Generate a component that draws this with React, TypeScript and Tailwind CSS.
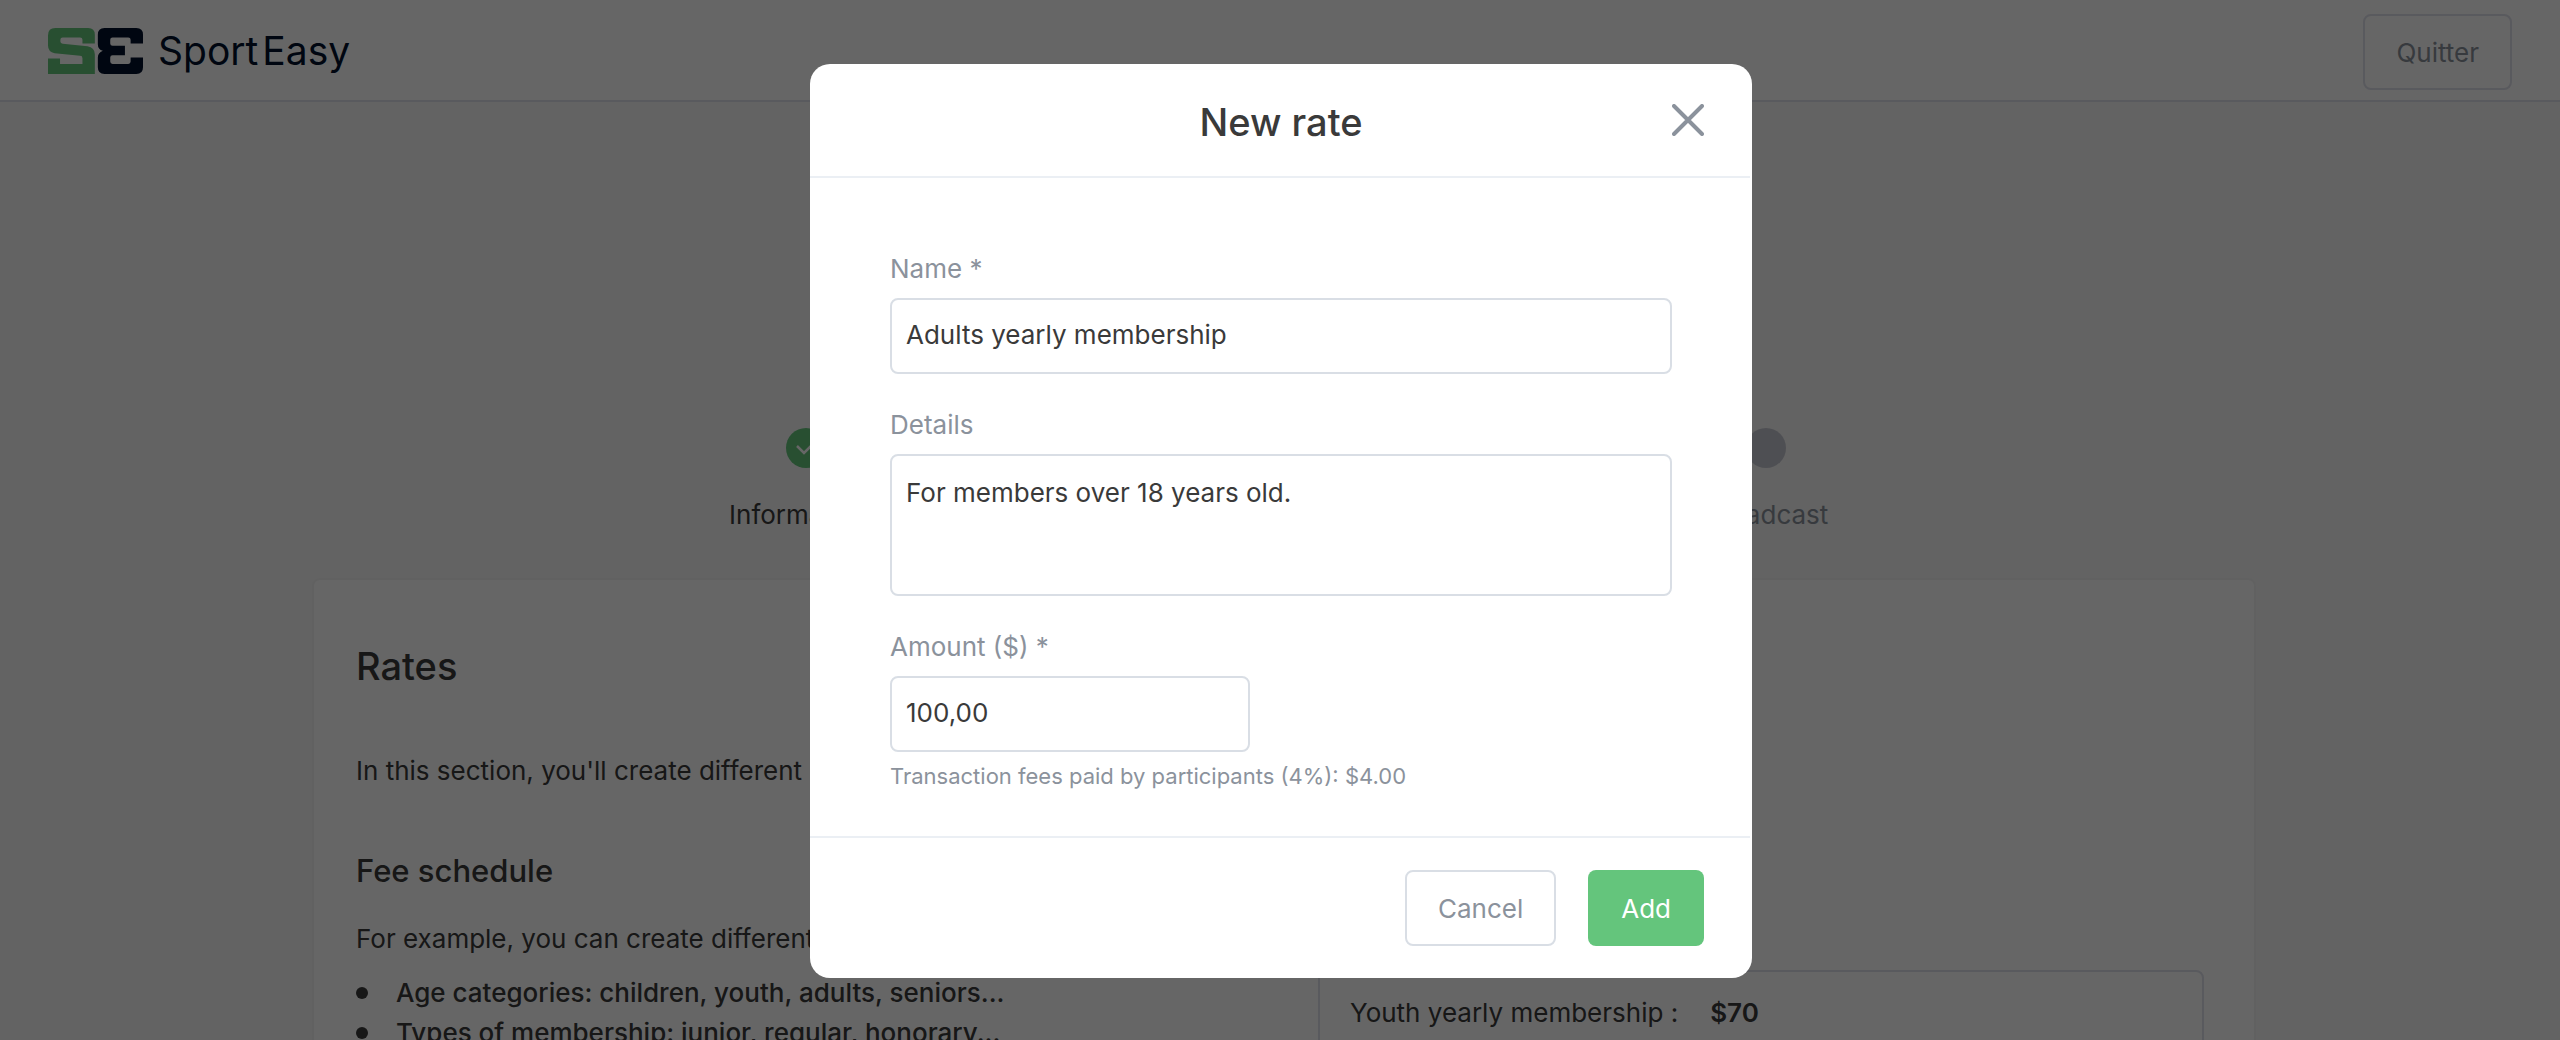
import React from "react";

function Logo() {
  return (
    <a href="#" aria-label="SportEasy" className="flex items-center gap-[15px] pb-0.5 text-[#000f2b]">
      <svg viewBox="144 84 284 137" className="h-[46px] w-[95px]" aria-hidden="true">
        <path
          fill="#64c57c"
          d="M166 84H264Q284 84 284 104V130H247V119Q247 112 240 112H188Q181 112 181 119V124Q181 130 188 131L262 138Q284 142 284 162V221H144V175H180V191H247V174Q247 167 240 167L164 159Q144 155 144 136V106Q144 84 166 84Z"
        />
        <path
          fill="#000f2b"
          d="M313 84H408Q428 84 428 104V130H391V119Q391 112 384 112H337Q330 112 330 119V130Q330 137 337 137H374V165H337Q330 165 330 172V184Q330 191 337 191H384Q391 191 391 184V172H428V201Q428 221 408 221H313Q293 221 293 201V172Q293 158 308 152Q293 147 293 132V104Q293 84 313 84Z"
        />
      </svg>
      <span className="flex gap-1 text-[39px] leading-[48px]">
        <span>Sport</span>
        <span>Easy</span>
      </span>
    </a>
  );
}

const steps = [
  { label: "Informations", done: true },
  { label: "Rates", done: true },
  { label: "Broadcast", done: false },
];

function Stepper() {
  return (
    <ol className="mx-auto grid w-full max-w-[1444px] grid-cols-3 pl-1">
      {steps.map((step) => (
        <li key={step.label} className="flex flex-col items-center gap-[27px]">
          {step.done ? (
            <span className="flex size-10 items-center justify-center rounded-full bg-[#64c57c]">
              <svg viewBox="0 0 20 14" className="h-3.5 w-5" fill="none" stroke="#fff" strokeWidth="2.5" aria-hidden="true">
                <path d="M1 5L8 12L19 1" />
              </svg>
            </span>
          ) : (
            <span className="size-10 rounded-full bg-[#c4c6d0]" />
          )}
          <span className={step.done ? "text-[#3a3a3a]" : "text-[#8b929c]"}>{step.label}</span>
        </li>
      ))}
    </ol>
  );
}

function RatesCard() {
  return (
    <section className="mt-[43px] rounded-lg border-2 border-[#f3f3f3] bg-white pt-[62px] pr-[50px] pb-16 pl-[42px]">
      <h1 className="text-[38px] leading-[48px] font-medium">Rates</h1>
      <p className="mt-[61px]">In this section, you'll create different prices for your members.</p>
      <div className="mt-[60px] grid grid-cols-2 gap-[76px]">
        <div>
          <h2 className="text-[31px] leading-10 font-medium">Fee schedule</h2>
          <p className="mt-7">For example, you can create different rates by:</p>
          <ul className="mt-3.5 font-medium">
            {[
              "Age categories: children, youth, adults, seniors...",
              "Types of membership: junior, regular, honorary...",
            ].map((text) => (
              <li key={text} className="flex items-center gap-7 whitespace-nowrap">
                <span className="size-3 rounded-full bg-[#3a3a3a]" />
                {text}
              </li>
            ))}
          </ul>
        </div>
        <div className="pt-[119px]">
          <div className="flex gap-8 rounded-lg border-2 border-[#dfe0ea] px-[30px] pt-[21px] pb-5">
            <span>Youth yearly membership :</span>
            <span className="font-semibold">$70</span>
          </div>
        </div>
      </div>
    </section>
  );
}

const fieldClass =
  "block rounded-lg border-2 border-[#d9dee5] bg-white px-3.5 text-[#3a3a3a] outline-none";

function NewRateDialog() {
  return (
    <div
      role="dialog"
      aria-modal="true"
      aria-labelledby="dialog-title"
      className="w-full max-w-[942px] rounded-[20px] bg-white pr-0.5"
    >
      <header className="grid grid-cols-[1fr_auto_1fr] items-center border-b-2 border-[#ebeff4] pt-8 pr-[46px] pb-8 pl-12">
        <span />
        <h2 id="dialog-title" className="pt-1 text-[38px] leading-[44px] font-medium">
          New rate
        </h2>
        <button type="button" aria-label="Close" className="justify-self-end text-[#8b929c]">
          <svg viewBox="0 0 32 32" className="size-8" fill="none" stroke="currentColor" strokeWidth="4" strokeLinecap="round" aria-hidden="true">
            <path d="M2 2L30 30M30 2L2 30" />
          </svg>
        </button>
      </header>
      <form>
        <div className="flex flex-col gap-[31px] pt-[71px] pr-[78px] pb-11 pl-20">
          <div className="flex flex-col gap-[9px]">
            <label htmlFor="rate-name" className="text-[#8b929c]">Name *</label>
            <input id="rate-name" type="text" defaultValue="Adults yearly membership" className={`${fieldClass} h-[76px] w-full pb-1`} />
          </div>
          <div className="flex flex-col gap-[9px]">
            <label htmlFor="rate-details" className="text-[#8b929c]">Details</label>
            <textarea id="rate-details" defaultValue="For members over 18 years old." className={`${fieldClass} h-[142px] w-full resize-none pt-[17px]`} />
          </div>
          <div>
            <div className="flex flex-col gap-[9px]">
              <label htmlFor="rate-amount" className="text-[#8b929c]">Amount ($) *</label>
              <input id="rate-amount" type="text" defaultValue="100,00" className={`${fieldClass} h-[76px] w-[360px] pb-1`} />
            </div>
            <p className="mt-2 text-[22px] leading-8 text-[#8b929c]">
              Transaction fees paid by participants (4%): $4.00
            </p>
          </div>
        </div>
        <footer className="flex justify-end gap-8 border-t-2 border-[#ebeff4] py-8 pr-[46px] pl-12">
          <button type="button" className="h-[76px] rounded-lg border-2 border-[#d9dee5] px-[31px] pt-0.5 text-[#8b929c]">
            Cancel
          </button>
          <button type="button" className="h-[76px] rounded-lg bg-[#64c57c] px-[33px] pt-0.5 text-white">
            Add
          </button>
        </footer>
      </form>
    </div>
  );
}

export default function App() {
  return (
    <div className="h-screen overflow-hidden bg-[#f7f7f7] font-['Inter',sans-serif] text-[26px] leading-10 text-[#3a3a3a]">
      <header className="flex items-center justify-between border-b-2 border-[#dfe0ea] bg-white px-12 pt-3.5 pb-2.5">
        <Logo />
        <button type="button" className="h-[76px] rounded-lg border-2 border-[#dfe0ea] px-[31px] pt-0.5 text-[#8b929c]">
          Quitter
        </button>
      </header>
      <main className="pt-[326px] pl-2">
        <div className="mx-auto w-full max-w-[1944px]">
          <Stepper />
          <RatesCard />
        </div>
      </main>
      <div className="fixed inset-0 flex items-start justify-center overflow-hidden bg-black/60 pt-16 pl-0.5">
        <NewRateDialog />
      </div>
    </div>
  );
}
